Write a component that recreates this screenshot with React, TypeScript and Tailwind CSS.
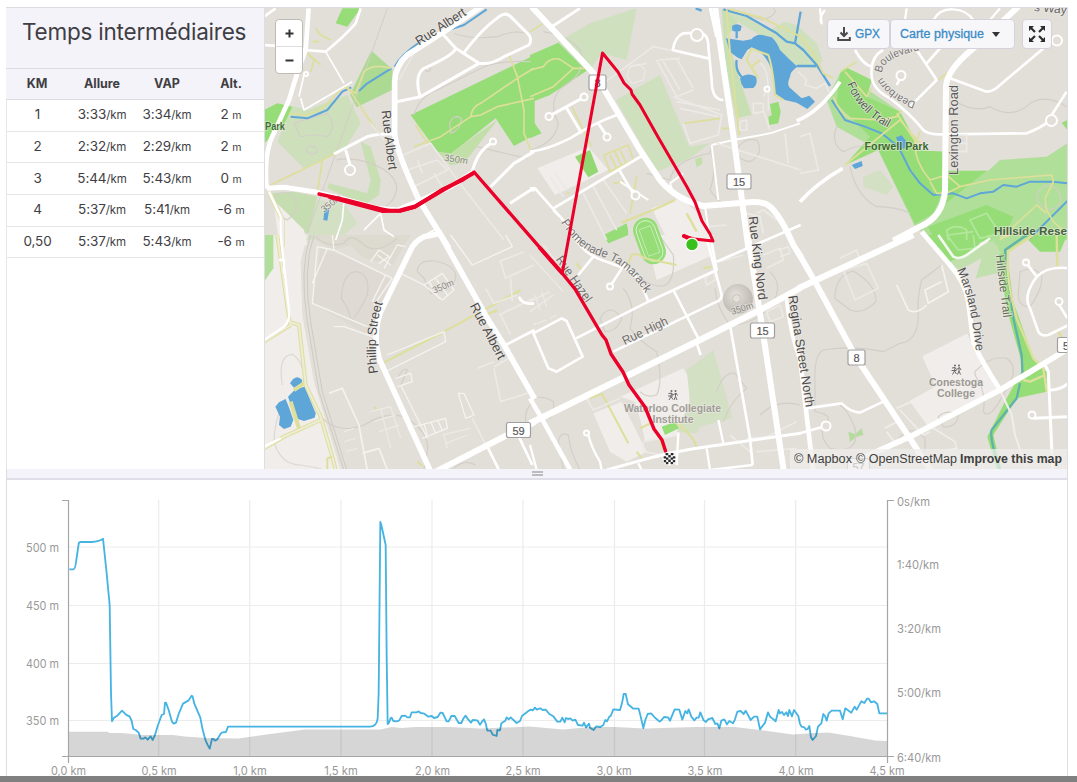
import React from "react";

type Layer = { x: number; y: number; items: [string, string, number?][] };

const LAND = "#e2ded8";
const PARK = "#96dd78";
const PARK_SOFT = "#b0df99";
const PARK_PALE = "#cfe0bf";
const CAMPUS = "#f0edea";
const WATER = "#5ea6d8";
const W = "#ffffff";
const MINOR = "#eceae6";
const TRAIL = "#dddf9a";
const CONTOUR = "#d3cec8";

// Every layer is drawn on a 3x grid whose origin sits at (x, y) of the map.
const areas: Layer[] = [
  {
    x: 264, y: 0, items: [
      ["M235 25H290L250 80L215 70Z", PARK],
      ["M322 152L385 208L384 270L278 322L258 285Z", "#acda93"],
      ["M85 318L130 330L250 285L290 370L240 450L120 505L40 425Z", "#cde0bb"],
      ["M0 330L40 310L85 320L60 375L0 430Z", PARK],
      ["M290 425L320 440L350 540L345 585L300 615L190 565L195 550L310 580L320 540Z", "#c8dfb4"],
      ["M15 580L90 575L160 590L135 700L60 690Z", "#c5ddb0"],
      ["M160 600L240 610L280 670L230 715L130 720Z", "#d3e0c4"],
      ["M440 345L812 165V405L750 438L695 355L560 462L520 455Z", PARK],
      ["M520 455L560 460L700 360L600 490L560 495Z", "#c2dfa9"],
      ["M28 600L70 640L120 690L130 735H45Z", CAMPUS],
    ],
  },
  {
    x: 530, y: 0, items: [
      ["M80 128L180 70L320 25L290 180L215 160L175 215Z", PARK_PALE],
      ["M0 165L85 128L170 212L60 285L0 308Z", PARK],
      ["M0 350L35 400L0 415Z", PARK],
      ["M258 300L390 225L478 440L540 430L480 475L380 515Z", PARK_PALE],
      ["M495 478L515 472L518 490L500 502Z", "#c2dfa9"],
      ["M575 28L640 45L590 110L630 240L665 345L618 355L585 180Z", "#c8dfb4"],
      ["M580 28L680 60L720 90L765 65L800 75L860 130L878 180L860 205L800 200L740 140L690 105L630 70Z", PARK_PALE],
      ["M720 312L745 305L752 335L745 370L718 375L715 350L725 345Z", PARK],
      ["M22 505L175 440L235 510L75 585Z", CAMPUS],
      ["M135 470L180 450L205 515L175 532Z", "#93d873"],
      ["M365 625L450 595L520 650L550 720L420 735Z", CAMPUS],
      ["M222 705L290 672L295 695L235 730Z", PARK],
    ],
  },
  {
    x: 800, y: 0, items: [
      ["M120 220L140 203L215 240L205 270L300 335L345 420L345 450L430 455L435 515L565 512L600 480L740 470L802 430V720H400L345 680L235 450L110 380L80 300Z", PARK_SOFT],
      ["M120 220L140 203L215 240L200 290L300 335L345 420L345 450L430 455L430 570L400 640L345 672L235 450L135 495L210 410L110 310Z", PARK],
      ["M440 512L560 512L450 600L420 630Z", PARK],
      ["M385 680L560 615L640 650L610 725H405Z", PARK],
      ["M785 368L802 360V390Z", PARK],
      ["M190 530L240 510L280 560L260 585L190 560Z", "#d3e0c4"],
    ],
  },
  {
    x: 264, y: 235, items: [
      ["M0 0H130L110 80L115 240L150 440L230 705H0Z", CAMPUS],
      ["M0 0H28V100L0 140Z", "#b0df99"],
      ["M135 0H440L385 90L300 70L260 30L205 45Z", "#dddacf"],
      ["M205 50L390 130L310 300L145 205L170 40Z", "#dfdbd4"],
    ],
  },
  {
    x: 530, y: 235, items: [
      ["M222 0L290 -35L295 0L235 25Z", PARK],
      ["M345 0H550V60L380 135Z", CAMPUS],
      ["M270 485L460 400L485 440L470 560L445 600L345 620L335 570L315 500Z", CAMPUS],
      ["M190 535L275 500L320 590L350 650L290 680L240 650Z", CAMPUS],
      ["M470 405L550 345L607 550L510 575L500 595L440 590L480 500Z", "#d3e0c4"],
      ["M395 575L435 560L447 580L405 600Z", PARK],
    ],
  },
  {
    x: 800, y: 235, items: [
      ["M370 0H560L480 95L440 85Z", PARK],
      ["M440 85L570 20L600 -10L615 45L610 110L527 130L545 70L480 105Z", "#c2e0ae"],
      ["M560 0H700L620 50L605 60L590 30Z", PARK_SOFT],
      ["M670 0H802L780 50L720 50Z", PARK],
      ["M595 60L620 50L640 200L700 370L740 410V470L650 490L580 600L605 705H590L562 605L620 490L670 400L620 220Z", PARK],
      ["M370 365L503 298L520 345L590 465L385 575L330 500L410 455Z", CAMPUS],
      ["M145 590L165 597L185 580L190 600L170 605L150 620Z", "#b5dc9e"],
    ],
  },
];

const ponds: Layer[] = [
  { x: 264, y: 0, items: [["M182 625L196 628L190 662L178 660Z", WATER]] },
  {
    x: 530, y: 0, items: [
      ["M606 78Q620 68 635 78L632 92L620 96L607 92Z", WATER],
      ["M588 115L640 122L664 118Q680 100 700 106L725 112Q740 125 750 150L775 175L802 200Q780 215 780 230Q770 250 778 262L815 295L838 287L855 305L832 327L800 308L765 300L735 280L726 212Q705 155 665 142L652 150L635 178Q615 170 598 152Z", WATER],
      ["M630 235Q650 215 678 230Q685 250 670 264L642 265Q632 252 630 235Z", WATER],
    ],
  },
  {
    x: 800, y: 0, items: [
      ["M155 495L185 483L188 498L165 507Z", WATER],
      ["M288 412L305 406L320 425L315 445L300 448Z", WATER],
    ],
  },
  {
    x: 264, y: 235, items: [
      ["M78 445Q95 415 115 435L110 458L90 458Z", WATER],
      ["M72 485L95 462L122 455L155 535L152 548L120 558L95 550Z", WATER],
      ["M34 515L45 502L65 492L76 520L88 555L80 575L60 582L45 570L48 545Z", WATER],
    ],
  },
];

const contours: Layer[] = [
  {
    x: 264, y: 0, items: [
      ["M215 480Q260 470 320 490Q390 515 398 560Q395 610 350 625", CONTOUR],
      ["M450 345Q465 290 520 270L660 200Q720 180 800 185", CONTOUR],
      ["M570 100Q620 120 700 110Q760 85 795 105", CONTOUR],
      ["M90 370Q150 350 190 340Q220 380 190 410Q150 400 110 410Z", CONTOUR],
      ["M125 450Q140 425 160 450Q150 475 125 450Z", CONTOUR],
      ["M557 370Q570 340 592 355Q590 390 560 400Z", CONTOUR],
      ["M640 440Q720 460 790 475", CONTOUR],
      ["M480 205Q490 190 500 205Q495 225 480 205Z", CONTOUR],
      ["M30 590Q65 565 90 590Q110 630 70 660Q30 640 30 590Z", CONTOUR],
    ],
  },
  {
    x: 530, y: 0, items: [
      ["M40 95Q120 110 150 150Q175 215 100 260Q50 300 85 370Q75 430 0 450", CONTOUR],
      ["M545 440L540 460Q430 480 420 540L350 520", CONTOUR],
      ["M620 450Q640 410 680 420Q705 460 660 485Q620 480 620 450Z", CONTOUR],
      ["M545 460Q560 520 540 570Q560 600 580 610", CONTOUR],
      ["M610 30L700 60Q750 40 730 25", CONTOUR],
      ["M300 200Q330 185 345 210L340 240L305 250L290 225Z", MINOR],
    ],
  },
  {
    x: 800, y: 0, items: [
      ["M460 300Q520 340 570 320Q640 360 690 310Q740 280 800 320", CONTOUR],
      ["M150 500Q170 590 230 620Q290 620 330 640", CONTOUR],
      ["M110 380Q90 430 130 455Q180 430 210 440", CONTOUR],
      ["M710 600Q710 560 750 555Q790 570 780 610Q750 650 710 600Z", CONTOUR],
    ],
  },
  {
    x: 264, y: 235, items: [
      ["M155 5Q190 40 240 25Q260 -10 300 30Q340 60 400 10", CONTOUR],
      ["M232 190Q235 115 275 110Q320 115 310 180Q270 260 260 255Q260 230 232 190Z", CONTOUR],
      ["M460 110Q460 75 510 78Q580 90 575 130Q560 170 500 175L480 130Z", CONTOUR],
      ["M55 450Q40 360 85 358Q120 380 120 440", "#dcd8d3"],
      ["M170 545Q220 600 300 570Q360 530 420 545Q500 590 490 650L480 700", CONTOUR],
      ["M60 500Q30 560 30 620Q50 690 110 690Q170 700 180 705", "#dcd8d3"],
      ["M400 430Q420 395 430 405L410 450", CONTOUR],
      ["M785 560Q780 520 810 500", CONTOUR],
      ["M570 700Q600 670 635 690", CONTOUR],
    ],
  },
  {
    x: 530, y: 235, items: [
      ["M210 250Q240 200 275 250Q260 290 225 290Z", CONTOUR],
      ["M280 160Q320 210 300 280Q330 320 380 350Q400 440 380 480Q350 490 330 470", CONTOUR],
      ["M330 130Q440 200 430 60L380 -10", CONTOUR],
      ["M555 160Q560 220 600 270Q680 270 730 200Q760 150 720 110", CONTOUR],
      ["M560 470Q580 410 615 415L650 460Q600 500 580 560", CONTOUR],
      ["M85 620Q90 590 115 600Q120 650 150 705M85 620L100 705", CONTOUR],
      ["M10 490Q40 480 70 500Q75 530 60 550", CONTOUR],
      ["M690 540Q740 490 810 510", CONTOUR],
    ],
  },
  {
    x: 800, y: 235, items: [
      ["M105 190Q105 120 160 108Q230 150 228 200Q190 240 150 225Z", CONTOUR],
      ["M425 90L365 135Q350 190 355 250Q350 320 300 325L250 350Q160 330 70 345Q40 360 45 450V530Q100 540 80 560Q50 600 90 640Q180 660 165 580Q140 520 120 510", CONTOUR],
      ["M525 410Q570 360 620 370Q660 400 620 460Q570 560 550 530Q560 470 525 420Z", CONTOUR],
      ["M655 180L660 110Q700 90 725 120Q730 160 690 215Q655 215 655 180Z", CONTOUR],
      ["M415 545Q440 520 475 540Q470 580 430 575Z", CONTOUR],
      ["M290 620Q330 560 375 610V650", CONTOUR],
    ],
  },
];

const lines: Layer[] = [
  {
    x: 264, y: 0, items: [
      ["M370 25L130 700", "#d3cec6", 3],
      ["M80 350L130 355L190 330L235 275L262 262M285 273L310 250L382 205M392 200Q410 165 470 125M560 88L600 75L668 28", WATER, 6],
      ["M75 340L125 345L175 325L240 260L275 280L300 215Q330 190 380 205M250 260L340 395M20 555L175 480L215 460M175 480L160 580", TRAIL, 5],
      ["M125 155L150 180L140 215M125 155L170 195M155 85L170 105L200 120M145 125H165", TRAIL, 5],
      ["M735 165L760 230L780 330L780 400L800 450M450 440L530 410L620 350Q625 320 650 310L760 235L810 205M620 350L650 345L700 320L810 295M455 375L490 430", TRAIL, 5],
      ["M15 575L55 660V740", TRAIL, 14],
      ["M15 575L55 660V740", "#f0edea", 10],
      ["M110 295L120 330L145 315L265 245M185 155L240 250M120 225L105 290", W, 5],
      ["M0 135L70 140L125 150L185 155Q240 110 275 70L290 25M0 50L35 25", W, 8],
      ["M210 462L310 410Q340 400 385 402M245 450L258 495", W, 9],
      ["M15 575L50 650V740", W, 6],
      ["M398 305L470 290L645 190M530 95L575 145L645 190Q680 195 720 170L795 135Q805 120 795 105L740 50Q725 35 705 50Q650 90 600 158M575 145Q570 165 480 205Q450 225 468 290", W, 9],
      ["M405 470L500 430L580 540L720 720M430 510L520 480L550 510L450 560M460 480L475 520M510 520L540 570", MINOR, 5],
      ["M690 425Q640 450 625 515M680 560L750 490L810 455M738 610L800 570H812", W, 9],
      ["M240 600L235 660L215 720M300 690L350 640L360 690L390 710M460 718L520 685", W, 5],
      ["M320 370L360 420M405 240L450 160", MINOR, 4],
      ["M134 25L125 150L98 225L75 300L20 420Q0 480 8 565", W, 14],
      ["M8 565L60 562L150 575L250 600L340 625L400 630L460 605L560 560L630 515", W, 15],
      ["M655 18L540 95L430 165Q395 195 392 245V400Q395 450 465 600L555 745", W, 17],
    ],
  },
  {
    x: 530, y: 0, items: [
      ["M0 210L40 200Q60 170 90 178L130 205L170 205M0 290L70 260L130 205M0 95L40 70", TRAIL, 5],
      ["M580 28L650 48L740 100L770 125L795 130L820 150L860 195L900 258M812 35L795 130M800 198H858M620 95V115M620 180Q615 215 640 235M497 25L515 32", WATER, 7],
      ["M590 28L600 160L628 405", TRAIL, 6],
      ["M600 28L700 55L760 85L812 110L850 160L880 220L910 235M665 145L650 180L685 235M662 145L715 165Q728 200 735 285L760 300M665 200L690 180", TRAIL, 6],
      ["M125 320L160 390L185 440M460 370L570 355M222 465L295 435L310 480L240 515ZM240 465L260 505M255 455L275 498M270 450L290 492", TRAIL, 5],
      ["M275 668L370 630L435 600M470 640L500 695", TRAIL, 7],
      ["M575 385H600M250 550L280 545M320 530L300 640M110 580H120", TRAIL, 5],
      ["M380 180L440 290L490 270M400 185L450 270M440 175L490 265M385 180L450 175M430 290L575 345L565 405L480 430L460 370M440 305L570 330M450 325L565 350", MINOR, 5],
      ["M220 250L370 140L535 175M300 200L350 190M60 530L100 590M75 520L110 570M190 560L260 690M160 580L230 720M220 540L290 640", MINOR, 5],
      ["M65 80L150 25M55 350L165 290M110 325L155 400M205 370L232 410", W, 9],
      ["M0 455Q50 450 120 415Q190 370 260 345M70 625L340 465M0 565H15L130 695L150 720M265 505L315 590M70 630L90 650", W, 8],
      ["M270 545L355 600", W, 6],
      ["M428 150Q435 110 460 100L500 98Q535 95 535 140L545 240Q545 300 580 300M428 150L535 175", W, 8],
      ["M610 420L720 400L810 370M545 435L610 420M545 435L565 600M420 550Q425 580 470 600M525 620L540 718M420 550L460 520", W, 6],
      ["M560 430L812 510M765 400L775 490M630 365L650 360V390H630ZM670 340V310H700V335ZM700 290L715 265M700 330L720 390M715 330V285Q715 200 690 190", MINOR, 5],
      ["M680 640L700 630L740 660M530 680L590 675M650 640L690 650L700 700", MINOR, 5],
      ["M5 20L70 90L200 230L330 450L390 540Q440 600 520 618L640 608Q700 600 720 620Q750 645 790 735L815 775", W, 18],
      ["M555 20L570 130L612 420L655 745", W, 18],
      ["M540 20L560 110", W, 10],
    ],
  },
  {
    x: 800, y: 0, items: [
      ["M95 300L135 360L195 380L245 400L295 440L330 510L360 550L400 585L460 580L500 595L540 580L580 575L610 555L650 560L690 545H760L805 550M805 600L690 715", WATER, 6],
      ["M120 215L170 185M135 215L200 290L215 265M100 290Q120 340 150 355L240 360L290 350L305 330M135 495L300 360L360 430M345 420Q340 480 390 540L440 525L480 560L570 540L755 525L760 545L735 595L740 630L760 665L800 700M360 395L340 450M390 545L410 580H440L480 560M415 240L460 205L510 140M740 640L710 615L640 680L600 720M290 340L350 430", TRAIL, 5],
      ["M-10 362Q60 335 120 245M0 605Q50 550 128 505", W, 11],
      ["M60 25L65 70Q55 55 75 30M320 25L315 60M600 25L570 60M400 60Q420 25 460 28Q500 30 520 60", W, 7],
      ["M165 150Q190 195 215 200M250 150Q210 170 215 230Q220 270 270 295Q330 340 370 390Q385 405 430 403L680 400Q720 385 745 365M330 320L410 240L350 150M380 190L420 145", W, 8],
      ["M450 235L560 275Q580 275 600 255L760 120M755 345L800 275M290 255L300 235", W, 8],
      ["M-5 215L20 240L15 255L50 265L75 250L90 280M0 410L30 400L55 510L0 520M460 405H500V455H460M500 430H470", MINOR, 5],
      ["M445 720L440 690Q470 670 500 690V720M510 660L560 640L600 700L540 715Z", "#b4e79d", 5],
      ["M280 722L360 680Q430 650 435 570L438 260Q440 210 520 145L655 20", W, 18],
    ],
  },
  {
    x: 264, y: 235, items: [
      ["M140 0Q105 100 130 260L165 470L240 705M150 0Q115 100 140 260L175 470L248 705", "#cfcac3", 3],
      ["M40 0L75 250L80 270M80 262L105 270L125 450L170 545L205 665L215 705M0 320L80 270M120 445L90 465M80 500L105 580M170 555L60 605L0 640", TRAIL, 12],
      ["M40 0L75 250L80 270M80 262L105 270L125 450L170 545L205 665L215 705M0 320L80 270M170 555L60 605L0 640", "#eeecd8", 6],
      ["M355 385L530 295L770 165M665 240L700 225M330 515L340 528M460 680L475 692M205 665L190 670V705", TRAIL, 6],
      ["M50 0L75 225Q80 255 60 275L0 315M0 635L50 610M45 75H60V115", W, 7],
      ["M205 0L210 45L385 130M210 45L160 35L145 205L310 275M190 40L145 145M210 275L240 275L340 310M385 130L330 210M365 120L325 200M400 110L480 150", "#f5f3f0", 4],
      ["M320 80L345 45L375 65L345 85M360 100L400 30L425 35M340 60L380 90M480 150L535 115L570 165L535 195ZM495 140L525 190M515 130L550 180M560 0L625 90L745 35L725 0", "#f5f3f0", 4],
      ["M370 360L540 290L545 320L365 410M395 430L440 415L445 440L400 455M410 450L470 570L490 610M600 475L630 540L605 550L583 475ZM450 575L545 550L550 580L475 610M480 565L490 600M500 560L515 595M520 555L535 585", "#f5f3f0", 4],
      ["M195 475L235 460L285 570L290 600L310 705M295 655L345 640L370 705", "#f5f3f0", 5],
      ["M320 530L380 515L410 610M330 560L395 540M345 590L405 570M240 590L270 580M240 620L275 610M245 650L280 640M350 520L380 640M535 600L620 580M545 625L610 600M540 600L550 640", MINOR, 4],
      ["M705 80L780 50M710 80L725 130L810 90M665 160L690 205L760 180M705 240L810 190M710 240L740 300M690 395L735 370M690 400L710 500L805 470M740 130L745 200M625 550L665 630M640 400L690 380", MINOR, 5],
      ["M725 330L812 285M765 185Q775 210 810 205M670 635L705 705M760 595L805 690", W, 8],
      ["M535 -6L480 5Q450 20 440 45L350 230Q325 300 345 370L500 710", W, 17],
      ["M525 -8L670 250L720 330L812 492", W, 17],
      ["M515 710L730 600L812 562", W, 18],
    ],
  },
  {
    x: 530, y: 235, items: [
      ["M215 475L295 625M140 85L155 105M330 580L360 565M440 565Q490 600 500 635M320 650L335 670M390 610L400 645M290 95L305 60Q320 50 345 70L440 90M520 100L545 95M180 490L220 475", TRAIL, 6],
      ["M0 230L70 180M10 270L50 255M60 250L80 240M0 200L60 170M15 180L30 225M35 170L50 215M0 60L100 170M40 30L80 80", MINOR, 4],
      ["M170 490L190 525L270 490M340 620L450 600M340 620V650L400 660M570 80L640 60M525 130L550 110L555 135L530 150ZM650 610L780 600M600 600L660 650M710 230L750 210L760 245L720 260Z", MINOR, 5],
      ["M710 100L760 75L750 40L700 60M745 45L775 35L780 55L750 65M690 615L800 560M680 650L800 640", MINOR, 5],
      ["M130 0Q160 60 230 80L270 95Q320 100 355 200M190 65L145 120M285 85L240 155M138 310L355 200L560 105L540 -5M560 80L812 -30", W, 8],
      ["M530 10L575 180Q575 195 560 200L250 350M430 165L505 310M500 325L512 360M600 270L660 610L668 690M10 295L95 250L110 258L158 365L80 410L55 400Z", W, 8],
      ["M565 555L580 625M530 640L540 705M668 690L540 705M0 630L20 705M175 600Q185 640 210 680L215 705M325 685L335 705M445 595L440 690", W, 7],
      ["M0 490L35 550L125 712", W, 14],
      ["M230 705L320 680Q420 650 530 635L812 595", W, 9],
      ["M0 565L500 320L700 220L812 158", W, 19],
      ["M652 -8L700 300L745 600L762 712", W, 18],
      ["M768 180Q780 300 812 380", W, 11],
    ],
  },
  {
    x: 800, y: 235, items: [
      ["M680 0L615 45Q625 130 640 250L665 360L668 430M660 445L650 490L575 585Q568 610 600 705", "#5fb3a8", 7],
      ["M700 0L625 50Q615 120 650 250L700 370L730 400L740 470M770 0L772 95M775 290L790 315M670 435L690 440L735 420M600 10L630 0", TRAIL, 7],
      ["M120 70L170 45L180 80M130 105L200 85L235 160L165 195Z", MINOR, 5],
      ["M425 90L445 170L385 205L375 165L425 140M290 150L325 225Q350 240 380 210", "#f5f3f0", 5],
      ["M445 0L520 -10M440 0L475 45L525 40L520 0", "#b4e79d", 5],
      ["M415 0L460 65Q480 75 500 60L570 10", "#f4faf0", 8],
      ["M290 520L335 500L400 580L465 620L470 640L440 645M300 525L370 600L390 590M255 580L290 560L310 590M260 590L290 630L310 620M370 365L503 298M370 365L410 455L330 500", "#f0eeea", 5],
      ["M20 520L125 505Q150 530 180 533L250 500M0 595L70 575M680 85L710 125M775 205L802 250M810 100Q730 90 700 140Q670 190 690 220L715 290Q725 305 745 300L805 270", W, 8],
      ["M600 465L635 540L645 600L680 700", "#f0eeea", 6],
      ["M735 390L745 410L758 705M750 465Q780 465 805 445M700 550L805 545", W, 9],
      ["M-5 160L340 0", W, 19],
      ["M-10 45L45 140L170 370L330 610L395 712", W, 18],
      ["M0 370L15 500L40 712", W, 14],
      ["M365 -10L450 90Q495 140 505 200L520 320Q525 345 600 465", W, 15],
      ["M140 690L330 605L600 465L810 338", W, 17],
    ],
  },
];

const culDeSacs: [number, number, number][] = [
  [350, 170, 5], [306, 74, 2], [493, 141.5, 3], [697, 35, 6], [584, 97, 3.5], [549, 116.5, 3.5], [607, 137, 3.5], [635.5, 195.5, 4],
  [901, 75.5, 4.5], [1057, 40.5, 5], [1051.5, 120.5, 5.5], [767, 89, 2.5], [610, 286.5, 3], [586.5, 433, 2.5], [1026, 262.5, 3], [1059, 301.5, 3.5],
  [1032, 415, 3.5], [826, 426, 4.5],
];

function Tiles({ layers, fill, width }: { layers: Layer[]; fill?: boolean; width?: number }) {
  return (
    <>
      {layers.map((l, i) => (
        <g key={i} transform={`translate(${l.x} ${l.y}) scale(.33333)`}>
          {l.items.map(([d, c, w], k) => (
            <path key={k} d={d} fill={fill ? c : "none"} stroke={fill ? "none" : c} strokeWidth={w ?? width} strokeLinejoin="round" strokeLinecap="butt" />
          ))}
        </g>
      ))}
    </>
  );
}

function Label({ x, y, r = 0, len, size = 13, color = "#4b4b4b", bold, anchor = "middle", children }: {
  x: number; y: number; r?: number; len?: number; size?: number; color?: string; bold?: boolean; anchor?: "start" | "middle" | "end"; children: string;
}) {
  return (
    <text
      transform={`translate(${x} ${y}) rotate(${r})`}
      textAnchor={anchor} dominantBaseline="central" fontSize={size} fontWeight={bold ? 700 : 400}
      fill={color} stroke="#f2efeb" strokeOpacity=".6" strokeWidth="1.600" paintOrder="stroke" textLength={len} lengthAdjust="spacingAndGlyphs"
    >
      {children}
    </text>
  );
}

function CurveLabel({ id, d, len, size = 13, color = "#5a5a5a", children }: { id: string; d: string; len: number; size?: number; color?: string; children: string }) {
  return (
    <>
      <path id={id} d={d} fill="none" />
      <text fontSize={size} fill={color} stroke="#f2efeb" strokeOpacity=".6" strokeWidth="1.600" paintOrder="stroke">
        <textPath href={`#${id}`} textLength={len} lengthAdjust="spacingAndGlyphs">{children}</textPath>
      </text>
    </>
  );
}

function Shield({ x, y, w, children }: { x: number; y: number; w: number; children: string }) {
  return (
    <g>
      <rect x={x - w / 2} y={y - 7.5} width={w} height={15} rx={2} fill="#fff" stroke="#a0a0a0" strokeWidth="1.2" />
      <text x={x} y={y + 0.5} fontSize="11" textAnchor="middle" dominantBaseline="central" fill="#5a5a5a" stroke="#5a5a5a" strokeWidth=".2">{children}</text>
    </g>
  );
}

function School({ x, y }: { x: number; y: number }) {
  return (
    <g transform={`translate(${x} ${y})`} stroke="#6a6a6a" strokeWidth="1" fill="none">
      <circle cx="-1.5" cy="-4" r="1" fill="#6a6a6a" stroke="none" />
      <circle cx="2.5" cy="-4" r="1" fill="#6a6a6a" stroke="none" />
      <path d="M-4.500 -1.500L-1.500 -2L0 0L3 -2L4.500 .5M-1.500 -2L-2 1.500L-4 5M-2 1.500L0 4.500M2.500 -2V1.500L4 5M2.500 1.500L1 5M-5 1H0" />
    </g>
  );
}

function MapView() {
  return (
    <svg viewBox="265 8 802 461" className="block h-full w-full" fontFamily="'Liberation Sans', Arial, sans-serif" preserveAspectRatio="none">
      <defs>
        <radialGradient id="hill" cx=".42" cy=".38" r=".6">
          <stop offset="0" stopColor="#e6e2dd" />
          <stop offset=".45" stopColor="#d3cec8" />
          <stop offset="1" stopColor="#bdb8b2" />
        </radialGradient>
      </defs>
      <rect x="264" y="8" width="804" height="462" fill={LAND} />
      <Tiles layers={areas} fill />
      <Tiles layers={contours} width={3.5} />
      <circle cx="738" cy="299" r="15" fill="url(#hill)" />
      <circle cx="736.500" cy="298.500" r="4" fill="#e3dfd9" stroke="#c9c4bd" />
      <Tiles layers={ponds} fill />
      <g transform="rotate(-20 649.500 241)" fill={PARK} stroke="#fff">
        <rect x="637" y="217" width="25" height="48" rx="12.500" strokeWidth="0" />
        <rect x="640" y="220" width="19" height="42" rx="9.500" strokeWidth=".8" strokeOpacity=".7" />
        <rect x="643.500" y="227" width="12" height="28" strokeWidth=".6" strokeOpacity=".6" />
      </g>
      <Tiles layers={lines} />
      {culDeSacs.map(([x, y, r], i) => (
        <circle key={i} cx={x} cy={y} r={r} fill={LAND} stroke="#fff" strokeWidth="2" />
      ))}

      <Label x={440.5} y={26.5} r={-33} len={57}>Rue Albert</Label>
      <Label x={389.5} y={140} r={83} len={60}>Rue Albert</Label>
      <Label x={488} y={331} r={62} len={62}>Rue Albert</Label>
      <CurveLabel id="phillip" d="M378 373Q372 335 383 302" len={71} color="#4b4b4b">Phillip Street</CurveLabel>
      <Label x={758} y={258} r={83} len={84}>Rue King Nord</Label>
      <Label x={801.5} y={351} r={81} len={113}>Regina Street North</Label>
      <Label x={645} y={331} r={-26} len={49} size={12.5} color="#6b6b6b">Rue High</Label>
      <Label x={574} y={279} r={55} len={53} size={12.5} color="#6b6b6b">Rue Hazel</Label>
      <Label x={953.5} y={130} r={-90} len={90} color="#5a5a5a">Lexington Road</Label>
      <CurveLabel id="prom" d="M561 222Q577 250 603 257Q629 266 647 296" len={113} size={12} color="#747474">Promenade Tamarack</CurveLabel>
      <CurveLabel id="forwell" d="M847 84Q860 116 895 131" len={61} size={12}>Forwell Trail</CurveLabel>
      <CurveLabel id="boul" d="M882 73Q882 57 922 50" len={47} size={11} color="#757575">Boulevard</CurveLabel>
      <CurveLabel id="dear" d="M916 102Q892 95 881 75" len={43} size={10.5} color="#757575">Dearborn</CurveLabel>
      <CurveLabel id="mars" d="M957 270Q972 302 976 354" len={84} size={12.5} color="#555555">Marsland Drive</CurveLabel>
      <Label x={1003.5} y={286} r={83} len={63} size={12} color="#5f6b55">Hillside Trail</Label>
      <Label x={265} y={126} len={20} size={10} color="#3f7030" bold anchor="start">Park</Label>
      <Label x={896.5} y={145.500} len={64} size={11} color="#3b6a2b" bold>Forwell Park</Label>
      <Label x={994} y={231} len={73} size={11} color="#45603b" bold anchor="start">Hillside Rese</Label>
      <Label x={672.500} y={408} len={97} size={11} color="#a19d99" bold>Waterloo Collegiate</Label>
      <Label x={673} y={418.500} len={41} size={10.500} color="#a19d99" bold>Institute</Label>
      <Label x={956} y={381.500} len={54} size={11} color="#9c9894" bold>Conestoga</Label>
      <Label x={956} y={392.500} len={38} size={11} color="#9c9894" bold>College</Label>
      <Label x={456} y={159} r={8} len={24} size={9.500} color="#8a8580">350m</Label>
      <Label x={331} y={203} r={-38} len={23} size={9.500} color="#8a8580">350m</Label>
      <Label x={443} y={286} r={-24} len={22} size={9.500} color="#8a8580">350m</Label>
      <Label x={742} y={308} r={-18} len={23} size={9.500} color="#8a8580">350m</Label>
      <Label x={1034} y={7} r={5} len={33} size={12} color="#666" anchor="start">s Way</Label>
      <School x={673} y={395} />
      <School x={956.500} y={369.500} />

      <Shield x={597.500} y={82.500} w={17}>8</Shield>
      <Shield x={739} y={181.500} w={24}>15</Shield>
      <Shield x={762.500} y={330.500} w={24}>15</Shield>
      <Shield x={856.500} y={357.500} w={17}>8</Shield>
      <Shield x={518.500} y={430} w={24}>59</Shield>
      <Shield x={1066} y={345} w={17}>5</Shield>
      <Shield x={858.500} y={466} w={22}>57</Shield>

      <g fill="none" stroke="#ea0029" strokeLinejoin="round" strokeLinecap="round">
        <path strokeWidth="3" d="M684 236L694 239L713 241L710 234L702 221L695 202L687 187L658 137L640 105L632 94L631 90L624 83L618 72L602.500 53L562.500 272" />
        <path strokeWidth="3.400" d="M319 194L346 200L381 209Q390 211.500 400 211L415 207L443 189L463 180L474 172L562 273L575 289L602 335L606 340L611 354L623 372L629 385L645 407L654 429L662 440L665.500 451" />
        <path strokeWidth="4.200" d="M330 197L383 211L400 210.500L415 206.500L443 190L472 174" />
        <path strokeWidth="4" d="M684 236L690 239M540 248L562 273" />
      </g>
      <circle cx="692" cy="244.500" r="6.300" fill="#39c11b" stroke="#fff" strokeWidth="1.200" />
      <circle cx="669.500" cy="458.500" r="7" fill="#fff" />
      <g fill="#2a2a2a">
        <rect x="665.500" y="453" width="2.800" height="2.200" rx=".6" />
        <rect x="670.700" y="453" width="2.800" height="2.200" rx=".6" />
        <rect x="668.200" y="455" width="2.600" height="2.400" rx=".4" />
        <rect x="663.600" y="456.200" width="2.600" height="2.400" rx=".6" />
        <rect x="672.800" y="456.200" width="2.600" height="2.400" rx=".6" />
        <rect x="665.900" y="457.400" width="2.500" height="2.400" rx=".4" />
        <rect x="670.600" y="457.400" width="2.500" height="2.400" rx=".4" />
        <rect x="668.200" y="459.600" width="2.600" height="2.400" rx=".4" />
        <rect x="663.800" y="460" width="2.400" height="2.200" rx=".6" />
        <rect x="672.800" y="460" width="2.400" height="2.200" rx=".6" />
        <rect x="665.900" y="462" width="2.500" height="2.200" rx=".6" />
        <rect x="670.600" y="462" width="2.500" height="2.200" rx=".6" />
      </g>
    </svg>
  );
}

const splits = [
  ["1", "3:33", "3:34", "2"],
  ["2", "2:32", "2:29", "2"],
  ["3", "5:44", "5:43", "0"],
  ["4", "5:37", "5:41", "-6"],
  ["0,50", "5:37", "5:43", "-6"],
];

function Splits() {
  return (
    <section className="flex w-[259px] shrink-0 flex-col border-r border-[#dedde4] bg-white text-[#3f3e44]">
      <h2 className="h-[61px] border-b border-[#dddce4] bg-[#f4f3f9] pl-4 pt-1.5 text-[22.500px] leading-9 tracking-[-0.22px] whitespace-nowrap">Temps intermédiaires</h2>
      <div className="grid h-[31px] grid-cols-[62px_68px_62px_66px] items-center border-b border-[#dddce4] bg-[#f4f3f9] text-center text-[12.500px] font-bold">
        <span>KM</span><span>Allure</span><span>VAP</span><span>Alt.</span>
      </div>
      {splits.map(([km, pace, gap, alt]) => (
        <div key={km} className="grid h-[31.700px] grid-cols-[61px_68px_62px_66px] items-center border-b border-l border-[#e6e5ea] pb-[2px] text-center text-[13.500px] tracking-[-0.1px] whitespace-nowrap">
          <span>{km}</span>
          <span>{pace}<span className="text-[11.500px]">/km</span></span>
          <span>{gap}<span className="text-[11.500px]">/km</span></span>
          <span>{alt} <span className="text-[10.500px]">m</span></span>
        </div>
      ))}
      <div className="grow border-l border-[#e6e5ea]" />
    </section>
  );
}

const speed: [number, number, string][] = [
  [0, 480, "M208 268H220Q226 268 229 240L236 192Q237 186 242 186H275Q298 184 309 176L319 270L329 375L333 640L336 724L342 713L352 707L366 692L378 704L389 710L395 723L400 747L407 750L416 758L422 776L430 776L436 772L443 779L452 769L458 780L465 765L473 738L485 705L492 702L495 668L498 668L506 690L516 725L521 731L528 728L536 702L549 671L565 662L575 647L578 650L583 671L601 713L607 745L616 779L622 793L629 806L636 777L640 777L645 782L652 778L663 760L668 757L678 756L684 740H810"],
  [270, 480, "M0 740H300Q320 740 323 715L326 640L331 126L334 135L347 195L350 530L353 732L357 728L362 714L365 713L370 723L380 724L388 721L395 708L406 707L412 712L420 712L425 697L440 697L446 694L452 699L463 701L475 710L485 708L492 714L503 711L511 698L518 699L530 724L536 724L544 708L554 708L566 729L574 729L580 716L587 707L592 715L603 728L608 720L622 721L630 734L636 725L642 718L647 730L652 752L662 752L668 764L680 768L682 750L690 751L694 730L706 722L710 712L716 718L722 712L740 729L750 723L756 708L775 693L782 689L788 691L795 683L800 689L810 685"],
  [540, 640, "M0 204L8 210L17 209L28 222L40 229L52 245L61 245L67 233L74 247L78 234L84 237L91 235L98 242L106 239L114 255L128 257L132 248L138 262L147 251L150 263L161 270L169 259L181 261L190 255L196 240L201 244L208 230L212 228L220 208L240 210L246 190L251 162L257 162L264 193L280 206L296 206L301 225L310 264L316 240L323 222L333 220L346 234L359 245L365 240L372 231L384 232L390 242L404 208L418 209L427 239L436 213L442 220L446 208L454 230L463 241L470 233L476 233L481 217L491 241L498 246L504 238L517 234L526 252L532 250L538 265L544 242L553 238L561 253L568 243L579 250L585 238L592 215L602 213L611 222L617 212L632 240L642 230L652 230L660 268L675 248L684 217L690 230L707 244L716 210L720 220L726 216L732 225L739 217L744 228L748 210L756 229L762 210L775 228L780 252"],
  [800, 480, "M0 732L5 740L13 742L18 749L23 747L28 738L33 772L38 780L48 768L54 740L64 730L70 702L75 708L80 722L86 700L95 692H120L128 718L136 685L144 691L154 698L164 680L170 689L184 664L193 669L201 656L206 656L213 667L222 664L232 672L238 700H262"],
];

const vGrid = [158.700, 249.700, 341, 432, 523, 614.500, 704.500, 795.700];
const hGrid: [number, string][] = [[547, "500 m"], [605.500, "450 m"], [663.500, "400 m"], [720.500, "350 m"]];
const kms: [number, string][] = [[68.500, "0,0 km"], [159, "0,5 km"], [250, "1,0 km"], [341, "1,5 km"], [432.500, "2,0 km"], [523, "2,5 km"], [614, "3,0 km"], [705, "3,5 km"], [796, "4,0 km"], [887, "4,5 km"]];
const paces: [number, string, number][] = [[501, "0s/km", 33], [564.500, "1:40/km", 42], [628.500, "3:20/km", 44], [692.500, "5:00/km", 44], [757, "6:40/km", 44]];

function Chart() {
  return (
    <svg viewBox="7 480 1059 296" className="block h-[296px] w-[1059px]" fontFamily="Inter, sans-serif" fontSize="11.500">
      <g stroke="#ececec" fill="none">
        {vGrid.map((x) => <path key={x} d={`M${x} 500V756`} strokeWidth="1.200" />)}
        {hGrid.map(([y]) => <path key={y} d={`M69 ${y}H887`} />)}
      </g>
      <g fill="none" stroke="#45b4e2" strokeWidth="5.500" strokeLinejoin="round">
        {speed.map(([x, y, d]) => <path key={x} d={d} transform={`translate(${x} ${y}) scale(.33333)`} />)}
      </g>
      <path fill="#000" fillOpacity=".16" d="M69 731.700H107L110 733H122L142 735H173L185 736.500L207 738L238 738.500L270 734L305 729.500L380 729.500L392 727L402 728L415 727H450L480 728.500L530 726.500L563 729.500L590 727H615L645 728.500L695 727H735L760 730L793 734.500L815 733L828 732.500L850 736L875 740.500L887 741V756H69Z" />
      <g stroke="#a6a6a6" fill="none" strokeWidth="1.200">
        <path d="M62 500.500H68.500V763M62 756.500H894M894 500.500H887.500V763" />
      </g>
      <g fill="#999">
        {hGrid.map(([y, t]) => <text key={t} x="59" y={y + 4.5} textAnchor="end" textLength="33" lengthAdjust="spacingAndGlyphs">{t}</text>)}
        {kms.map(([x, t]) => <text key={t} x={x} y="774.500" textAnchor="middle" textLength={t[0] === "1" ? 33.500 : 35} lengthAdjust="spacingAndGlyphs">{t}</text>)}
        {paces.map(([y, t, l]) => <text key={t} x="897" y={y + 4.5} textLength={l} lengthAdjust="spacingAndGlyphs">{t}</text>)}
      </g>
    </svg>
  );
}

export default function App() {
  return (
    <main className="flex h-[782px] w-[1077px] flex-col overflow-hidden bg-white font-['Inter',sans-serif]">
      <div className="mt-[7px] ml-[6px] flex h-[769px] w-[1062px] flex-col border-x border-t border-[#dddce3]">
        <div className="-ml-px flex h-[461px] w-[1061px]">
          <Splits />
          <div className="relative min-w-0 flex-1 overflow-hidden bg-[#e2ded8]">
            <MapView />
            <div className="absolute top-[11px] left-[10px] flex h-[55px] w-7 flex-col rounded border border-[#bdbbb8] bg-white">
              <button className="flex flex-1 items-center justify-center border-b border-[#dedede]">
                <svg viewBox="0 0 9 9" className="h-[9px] w-[9px]"><path d="M4.500 .5V8.500M.5 4.500H8.500" stroke="#333" strokeWidth="2" /></svg>
              </button>
              <button className="flex flex-1 items-center justify-center">
                <svg viewBox="0 0 9 9" className="h-[9px] w-[9px]"><path d="M.5 4.500H8.500" stroke="#333" strokeWidth="2" /></svg>
              </button>
            </div>
            <div className="absolute top-[11px] right-[15px] flex h-[30px] font-['Liberation_Sans',sans-serif] text-[12.500px] text-[#2f86c4]">
              <button className="flex w-[63px] items-center justify-center gap-1 rounded border border-[#d4d2dc] bg-[#f7f7fa]">
                <svg viewBox="0 0 14 16" className="h-4 w-3.5" fill="none" stroke="#4a4a4a" strokeWidth="2"><path d="M7 1V10M3.500 6.500L7 10L10.500 6.500M1.200 11V14H12.800V11" /></svg>
                <svg viewBox="0 0 25 14" className="h-3.5 w-[25px]"><text x="0" y="11" fontSize="12.500" textLength="25" lengthAdjust="spacingAndGlyphs" fill="#3a8cc6" stroke="#3a8cc6" strokeWidth=".3">GPX</text></svg>
              </button>
              <button className="flex w-[125px] items-center gap-2 rounded border border-[#d4d2dc] bg-[#f7f7fa] pl-[9px]">
                <svg viewBox="0 0 84 16" className="h-4 w-[84px]"><text x="0" y="12" fontSize="12.500" textLength="84" lengthAdjust="spacingAndGlyphs" fill="#3a8cc6" stroke="#3a8cc6" strokeWidth=".3">Carte physique</text></svg>
                <svg viewBox="0 0 8 5" className="h-[5px] w-2"><path d="M0 0H8L4 5Z" fill="#333" /></svg>
              </button>
              <button className="ml-[7px] flex w-[30px] items-center justify-center rounded border border-[#d4d2dc] bg-[#f7f7fa]">
                <svg viewBox="0 0 16 16" className="h-4 w-4" fill="#2c2c2c" stroke="#2c2c2c" strokeWidth="2.200">
                  <path d="M2 2L6 6M14 2L10 6M2 14L6 10M14 14L10 10" />
                  <path stroke="none" d="M0 0H5L0 5ZM16 0V5L11 0ZM0 16V11L5 16ZM16 16H11L16 11Z" />
                </svg>
              </button>
            </div>
            <div className="absolute right-0 bottom-0 flex h-[20px] w-[277px] items-center bg-[#efedeb]/75 pl-1">
              <svg viewBox="0 0 268 16" className="h-4 w-[268px]" fontFamily="'Liberation Sans', Arial, sans-serif" fontSize="12" fill="#404040">
                <text y="12" textLength="58" lengthAdjust="spacingAndGlyphs">© Mapbox</text>
                <text x="62" y="12" textLength="101" lengthAdjust="spacingAndGlyphs">© OpenStreetMap</text>
                <text x="166" y="12" textLength="102" lengthAdjust="spacingAndGlyphs" fontWeight="700">Improve this map</text>
              </svg>
            </div>
          </div>
        </div>
        <div className="flex h-[11px] shrink-0 items-center justify-center border-b-2 border-[#dfdee8] bg-[#f4f3f9]">
          <div className="flex w-[11px] flex-col gap-px">
            <i className="h-[2px] bg-[#bcbcc0]" /><i className="h-[2px] bg-[#bcbcc0]" />
          </div>
        </div>
        <Chart />
      </div>
      <div className="h-[6px] shrink-0 bg-[#808080]" />
    </main>
  );
}
